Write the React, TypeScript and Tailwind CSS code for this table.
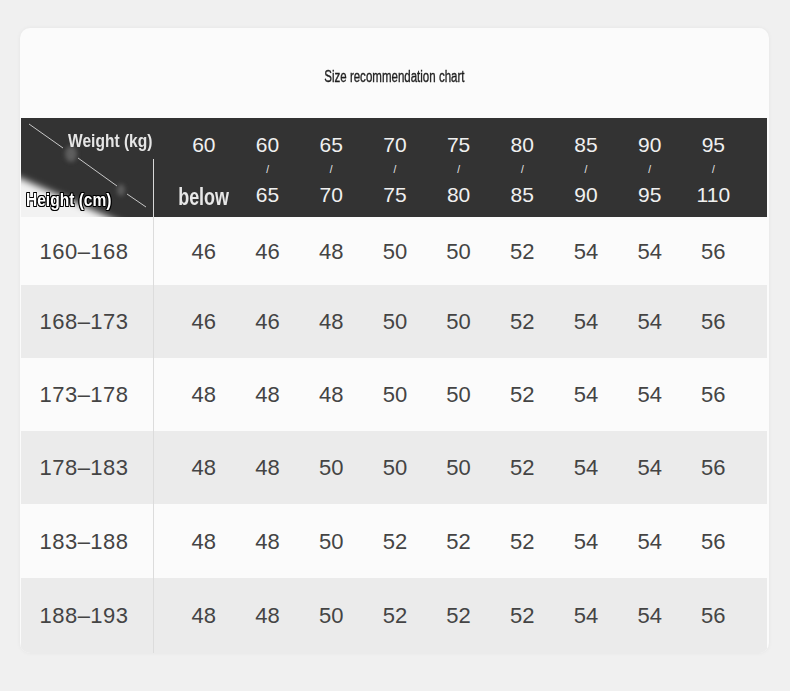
import React from "react";

const cols: [string, string][] = [
  ["60", "below"],
  ["60", "65"],
  ["65", "70"],
  ["70", "75"],
  ["75", "80"],
  ["80", "85"],
  ["85", "90"],
  ["90", "95"],
  ["95", "110"],
];

const rows: { label: string; vals: number[]; h: string; gray: boolean }[] = [
  { label: "160–168", vals: [46, 46, 48, 50, 50, 52, 54, 54, 56], h: "h-[68px]", gray: false },
  { label: "168–173", vals: [46, 46, 48, 50, 50, 52, 54, 54, 56], h: "h-[73px]", gray: true },
  { label: "173–178", vals: [48, 48, 48, 50, 50, 52, 54, 54, 56], h: "h-[73px]", gray: false },
  { label: "178–183", vals: [48, 48, 50, 50, 50, 52, 54, 54, 56], h: "h-[73px]", gray: true },
  { label: "183–188", vals: [48, 48, 50, 52, 52, 52, 54, 54, 56], h: "h-[74px]", gray: false },
  { label: "188–193", vals: [48, 48, 50, 52, 52, 52, 54, 54, 56], h: "h-[75px]", gray: true },
];

const sans = "font-['Liberation_Sans','Arial',sans-serif]";

function Corner() {
  return (
    <div className="relative w-[132px] h-full overflow-hidden">
      <svg className="absolute inset-0" width="132" height="99" viewBox="0 0 132 99">
        <defs>
          <filter id="blur" x="-20%" y="-20%" width="140%" height="140%">
            <feGaussianBlur stdDeviation="3.5" />
          </filter>
          <filter id="blur2" x="-50%" y="-50%" width="200%" height="200%">
            <feGaussianBlur stdDeviation="2" />
          </filter>
        </defs>
        <polygon points="-10,56 108,108 -10,112" fill="#f2f2f2" filter="url(#blur)" />
        <line x1="8" y1="6" x2="42" y2="30" stroke="#c8c8c8" strokeWidth="1" />
        <line x1="57" y1="40" x2="96" y2="68" stroke="#c8c8c8" strokeWidth="1" />
        <line x1="106" y1="76" x2="125" y2="89" stroke="#c8c8c8" strokeWidth="1" />
        <ellipse cx="50" cy="36" rx="6" ry="8" fill="#7a7a7a" filter="url(#blur2)" opacity="0.6" />
        <ellipse cx="100" cy="72" rx="4" ry="6" fill="#777" filter="url(#blur2)" opacity="0.6" />
      </svg>
      <div className="absolute right-[1px] top-[11px] flex justify-end">
        <span
          className={`inline-block origin-right scale-x-[0.84] whitespace-nowrap text-[18.5px] leading-[24px] font-bold text-[#e6e6e6] ${sans}`}
        >
          Weight (kg)
        </span>
      </div>
      <div className="absolute left-[5px] top-[70px]">
        <span
          className={`inline-block origin-left scale-x-[0.84] whitespace-nowrap text-[18.5px] leading-[24px] font-bold text-white ${sans} [text-shadow:1px_0_0_#000,-1px_0_0_#000,0_1px_0_#000,0_-1px_0_#000,1px_1px_0_#000,-1px_-1px_0_#000,1px_-1px_0_#000,-1px_1px_0_#000]`}
        >
          Height (cm)
        </span>
      </div>
    </div>
  );
}

export default function App() {
  return (
    <div className="w-[790px] h-[691px] bg-[#f0f0f0] pt-[28px] pl-[20px]">
      <div className="w-[749px] h-[625px] bg-[#fbfbfb] rounded-[10px] shadow-[0_0_4px_rgba(0,0,0,0.05)] px-[1px] overflow-hidden">
        <div className="h-[90px] flex items-center justify-center pt-[8px]">
          <span
            className={`inline-block scale-x-[0.72] whitespace-nowrap text-[16px] text-[#1e1e1e] ${sans} [-webkit-text-stroke:0.35px_#1e1e1e]`}
          >
            Size recommendation chart
          </span>
        </div>
        <div className="w-[746px] h-[99px] bg-[#333333] flex">
          <Corner />
          <div className="w-[1px] h-full flex flex-col">
            <div className="h-[41px]" />
            <div className="flex-1 bg-[#d8d8d8]" />
          </div>
          <div className="pl-[18px] grid grid-cols-[repeat(9,63.7px)]">
            {cols.map(([a, b], i) => (
              <div key={i} className="flex flex-col items-center pt-[15px] text-[#f0f0f0]">
                <div className={`h-[24px] leading-[24px] text-[21px] ${sans}`}>{a}</div>
                <div className={`h-[26px] leading-[26px] text-[10px] ${sans}`}>{i === 0 ? "" : "/"}</div>
                {i === 0 ? (
                  <div className="h-[24px] flex justify-center">
                    <span
                      className={`inline-block origin-center scale-x-[0.78] whitespace-nowrap leading-[28px] text-[23px] font-bold text-[#e8e8e8] ${sans}`}
                    >
                      {b}
                    </span>
                  </div>
                ) : (
                  <div className={`h-[24px] leading-[24px] text-[21px] ${sans}`}>{b}</div>
                )}
              </div>
            ))}
          </div>
        </div>
        {rows.map((r, ri) => (
          <div key={ri} className={`w-[746px] ${r.h} flex ${r.gray ? "bg-[#ebebeb]" : "bg-[#fbfbfb]"}`}>
            <div
              className={`w-[132px] pr-[6px] flex items-center justify-center text-[22px] tracking-[0.5px] text-[#444] ${sans}`}
            >
              {r.label}
            </div>
            <div className="w-[1px] h-full bg-[#dcdcdc]" />
            <div className="pl-[18px] grid grid-cols-[repeat(9,63.7px)]">
              {r.vals.map((v, vi) => (
                <div key={vi} className={`flex items-center justify-center text-[22px] text-[#444] ${sans}`}>
                  {v}
                </div>
              ))}
            </div>
          </div>
        ))}
      </div>
    </div>
  );
}
